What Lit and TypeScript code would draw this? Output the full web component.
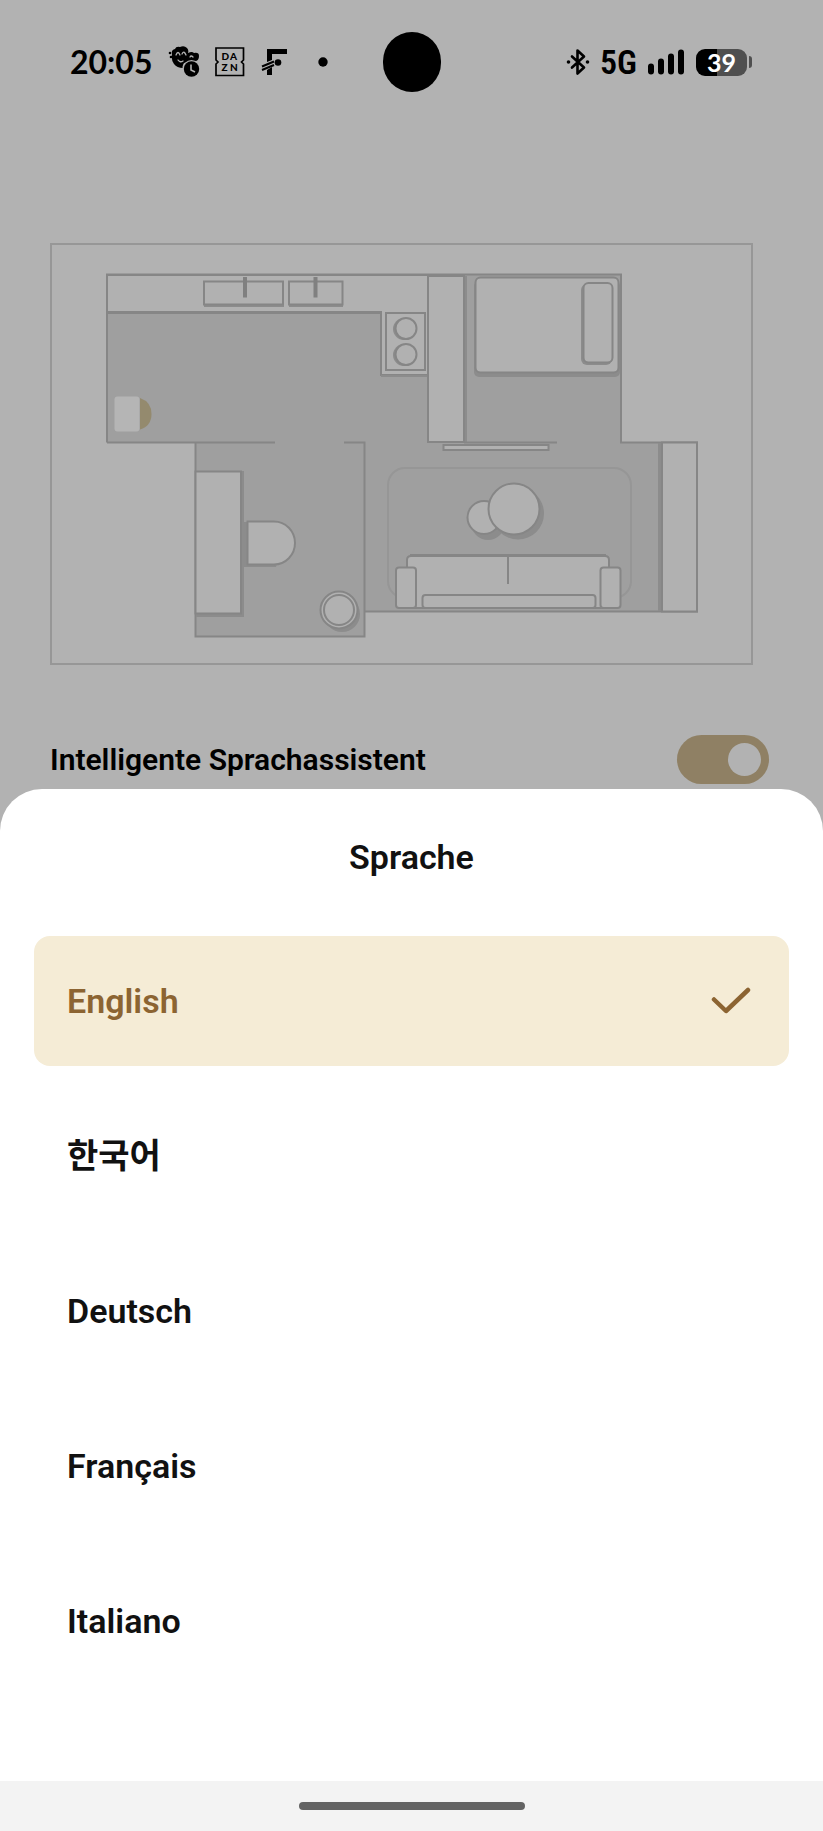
import { LitElement, html, css } from "lit";
import { customElement, state } from "lit/decorators.js";

const FONT = css`Roboto, "Noto Sans CJK KR", sans-serif`;

@customElement("status-bar")
class StatusBar extends LitElement {
  static styles = css`
    :host {
      display: grid;
      grid-template-columns: 1fr 58px 1fr;
      align-items: center;
      height: 94px;
      padding: 30px 70px 0;
      color: #000;
    }
    .side { display: flex; align-items: center; }
    .end { justify-content: flex-end; }
    .time { font: 700 32px/36px Lato, sans-serif; margin-right: 16px; }
    .app { margin-right: 15px; }
    .dot { margin-left: 11px; }
    .camera { height: 60px; border-radius: 29px; background: #000; }
    .net { font: 600 34px/36px "Roboto Condensed", Roboto, sans-serif; margin: 0 10px; }
    .signal { margin-right: 11px; }
    svg { display: block; flex: none; }
    .dazn { font: 900 10px Lato, sans-serif; }
    .battery { display: flex; align-items: center; gap: 2px; margin-right: 1px; }
    .level {
      width: 51px;
      border-radius: 9px;
      background: linear-gradient(90deg, #000 42%, #4f4f4f 42%);
      font: 700 25px/27px Lato, sans-serif;
      color: #fff;
      text-align: center;
    }
    .tip { width: 3px; height: 12px; border-radius: 0 3px 3px 0; background: #4f4f4f; }
  `;
  render() {
    return html`
      <div class="side">
        <time class="time">20:05</time>
        <svg class="app" width="32" height="32" viewBox="0 0 32 32" aria-hidden="true">
          <path d="M4 8Q3 4 7 3Q8 0 12 1Q16-1 19 2Q21 4 20 7Q24 5 26 7Q31 6 31 10Q31 15 27 15L16 17Q14 20 15 22Q9 22 6 18Q3 14 4 8Z" />
          <circle cx="2" cy="7" r="1.3" /><circle cx="3" cy="11" r="1.3" />
          <path d="M8 9Q10 4 12 9M14 8Q16 4 18 9M10 14Q12 17 15 15M22 11Q23 9 25 11" fill="none" stroke="#b2b2b2" stroke-width="1.3" stroke-linecap="round" />
          <circle cx="23.500" cy="23" r="9" fill="#b2b2b2" />
          <circle cx="23.500" cy="23" r="7.700" />
          <path d="M23 18.500V24L27 26" fill="none" stroke="#b2b2b2" stroke-width="1.600" />
        </svg>
        <svg class="app" width="30" height="30" viewBox="0 0 30 30" role="img" aria-label="DAZN">
          <path d="M1 1H28.500V13L26.500 15L28.500 17V28.500H1V17L3 15L1 13Z" fill="none" stroke="#000" stroke-width="1.700" />
          <text class="dazn" x="6.500" y="13">D</text><text class="dazn" x="15" y="13">A</text>
          <text class="dazn" x="6.500" y="24">Z</text><text class="dazn" x="15" y="24">N</text>
        </svg>
        <svg class="app" width="32" height="30" viewBox="0 0 32 30" aria-hidden="true">
          <path d="M7 2H27V7H12V13L7 15ZM7 23L12 20V28H7Z" />
          <circle cx="18" cy="15.500" r="3.300" />
          <path d="M2 19.500L14 14.500M2 23L14 18" stroke="#000" stroke-width="2" />
        </svg>
        <svg class="dot" width="10" height="10" viewBox="0 0 10 10" aria-hidden="true"><circle cx="5" cy="5" r="4.700" /></svg>
      </div>
      <div class="camera"></div>
      <div class="side end">
        <svg width="24" height="28" viewBox="0 0 24 28" role="img" aria-label="Bluetooth">
          <path d="M6 8.500L18 19.500L11.500 25.500V2.500L18 8.500L6 19.500" fill="none" stroke="#000" stroke-width="2.600" stroke-linejoin="round" stroke-linecap="round" />
          <circle cx="2.500" cy="14" r="1.800" /><circle cx="21.500" cy="14" r="1.800" />
        </svg>
        <span class="net">5G</span>
        <svg class="signal" width="38" height="28" viewBox="0 0 38 28" role="img" aria-label="Signal">
          <path d="M4 18.500V23.500M14 13.500V23.500M24 8.500V23.500M34 4.500V23.500" stroke="#000" stroke-width="6" stroke-linecap="round" />
        </svg>
        <div class="battery"><span class="level">39</span><span class="tip"></span></div>
      </div>
    `;
  }
}

@customElement("floor-plan")
class FloorPlan extends LitElement {
  static styles = css`
    :host { display: block; }
    svg { display: block; width: 100%; }
    .line { stroke: #868686; stroke-width: 2; }
    .floor { fill: #9f9f9f; }
    .item { fill: #b1b1b1; }
    .none { fill: none; }
    .shade { fill: #8c8c8c; }
    .rug { fill: #9f9f9f; stroke: #969696; stroke-width: 2; }
  `;
  render() {
    return html`
      <svg viewBox="50 243 703 422" role="img" aria-label="Grundriss">
        <rect class="none" x="51" y="244" width="701" height="420" stroke="#979797" stroke-width="2" />
        <path class="floor" d="M107 275H621V443H661V611H364V636H195V443H107Z" />
        <path class="item line" d="M107 275H428V375H381V312H107Z" />
        <path class="none" d="M108 312.500H380" stroke="#868686" stroke-width="3" />
        <path class="shade" d="M381 375H428V377H381Z" />
        <path class="none line" d="M107 442.500V274.500H621V442.500H697V611.500H364.500V442.500H344M107 442.500H275M195.500 442.500V636.500H364.500V611" />
        <path class="shade" d="M204 304H284V307H204ZM289 304H343V307H289Z" />
        <path class="item line" d="M204 281.500H283V304.500H204ZM289 281.500H342.500V304.500H289Z" />
        <path class="none" d="M245 277V297.500M315.500 277V297.500" stroke="#808080" stroke-width="4" />
        <rect class="item line" x="386" y="313" width="39" height="57" />
        <circle class="shade" cx="404" cy="329" r="11" /><circle class="shade" cx="404" cy="355" r="11" />
        <circle class="item line" cx="406" cy="328.500" r="10.500" /><circle class="item line" cx="406" cy="354.500" r="10.500" />
        <rect class="shade" x="464" y="276" width="3" height="167" />
        <rect class="item line" x="428" y="276" width="36" height="166" />
        <path class="none line" d="M464 442.500H557" />
        <rect class="shade" x="474" y="281" width="146" height="96" rx="5" />
        <rect class="item line" x="475.500" y="277.500" width="143" height="95" rx="5" />
        <rect class="shade" x="581" y="284" width="31" height="81" rx="6" />
        <rect class="item line" x="583.500" y="283" width="29" height="79.500" rx="5" />
        <rect class="item line" x="443.500" y="445" width="105" height="5" />
        <rect class="shade" x="658" y="443" width="4" height="168" />
        <rect class="item line" x="662" y="442.500" width="35" height="169" />
        <rect x="114.500" y="396.500" width="25" height="35" rx="3" fill="#b5b5b5" />
        <path d="M140 398Q151.500 402 151.500 414T140 429.500Z" fill="#948a6e" />
        <path class="shade" d="M196 471H244V617H196Z" />
        <path class="item line" d="M195.500 471.500H241V613.500H195.500Z" />
        <path class="shade" d="M243 522H276Q288 530 276 567H243Z" />
        <path class="item line" d="M247.500 521.500H274A21 21.500 0 0 1 274 564.500H247.500Z" />
        <circle class="shade" cx="342" cy="614" r="18" />
        <circle class="item line" cx="339" cy="610" r="18.500" />
        <circle class="item line" cx="339" cy="610" r="15" />
        <rect class="rug" x="388" y="468" width="243" height="130" rx="17" />
        <circle class="shade" cx="488" cy="523" r="17" />
        <circle class="item line" cx="484" cy="517.500" r="16.500" />
        <circle class="shade" cx="518" cy="513.500" r="26" />
        <circle class="item line" cx="514" cy="509" r="25.500" />
        <path class="item line" d="M407 608V560Q407 556 411 556H605Q609 556 609 560V608Z" />
        <path class="none" d="M410 555.500H606" stroke="#868686" stroke-width="3" />
        <path class="none line" d="M508 557V584" />
        <rect class="item line" x="422.500" y="595" width="173" height="13" rx="3" />
        <rect class="item line" x="396" y="567.500" width="20" height="40.500" rx="3" />
        <rect class="item line" x="600.500" y="567.500" width="20" height="40.500" rx="3" />
      </svg>
    `;
  }
}

@customElement("app-root")
class AppRoot extends LitElement {
  static styles = css`
    :host {
      display: flex;
      flex-direction: column;
      min-height: 100vh;
      background: #b2b2b2;
      font-family: ${FONT};
      color: #111;
    }
    * { box-sizing: border-box; }
    .plan { margin: 149px 70px 0 50px; }
    .setting {
      display: flex;
      align-items: center;
      justify-content: space-between;
      padding: 70px 54px 5px 50px;
      font-size: 30px;
      line-height: 34px;
      font-weight: 600;
      color: #000;
    }
    .toggle {
      appearance: none;
      width: 92px;
      height: 49px;
      margin: 0;
      padding: 8px;
      border-radius: 25px;
      background: #8f8064;
      display: flex;
      justify-content: flex-start;
    }
    .toggle:checked { justify-content: flex-end; }
    .toggle::before { content: ""; width: 33px; height: 33px; border-radius: 50%; background: #b2b2b2; }
    .sheet {
      flex: 1;
      background: #fff;
      border-radius: 42px 42px 0 0;
      padding: 48px 34px 95px;
    }
    h1 { margin: 0 0 59px; font-size: 34px; line-height: 40px; font-weight: 600; text-align: center; }
    .list { display: grid; gap: 25px; }
    .option {
      display: flex;
      align-items: center;
      justify-content: space-between;
      width: 100%;
      height: 130px;
      border: 0;
      border-radius: 16px;
      padding: 0 38px 0 33px;
      background: none;
      font: 600 34px/40px ${FONT};
      color: #111;
      text-align: left;
    }
    .option.on { background: #f5ecd6; color: #8c6432; }
    .nav { display: flex; align-items: center; justify-content: center; height: 50px; background: #f3f3f3; }
    .handle { width: 226px; height: 8px; border-radius: 4px; background: #636363; }
  `;
  @state() selected = "English";
  render() {
    return html`
      <status-bar></status-bar>
      <floor-plan class="plan"></floor-plan>
      <div class="setting">
        <label for="assistant">Intelligente Sprachassistent</label>
        <input class="toggle" id="assistant" type="checkbox" role="switch" checked />
      </div>
      <section class="sheet">
        <h1>Sprache</h1>
        <div class="list">
          ${["English", "한국어", "Deutsch", "Français", "Italiano"].map((name) => html`
            <button class="option ${name === this.selected ? "on" : ""}" aria-pressed=${name === this.selected} @click=${() => (this.selected = name)}>
              <span>${name}</span>
              ${name === this.selected ? html`<svg width="40" height="28" viewBox="0 0 40 28" aria-hidden="true">
                <path d="M3 12.500L15 24L37 3" fill="none" stroke="#8c6432" stroke-width="4.500" stroke-linecap="round" stroke-linejoin="round" /></svg>` : ""}
            </button>`)}
        </div>
      </section>
      <div class="nav"><div class="handle"></div></div>
    `;
  }
}
